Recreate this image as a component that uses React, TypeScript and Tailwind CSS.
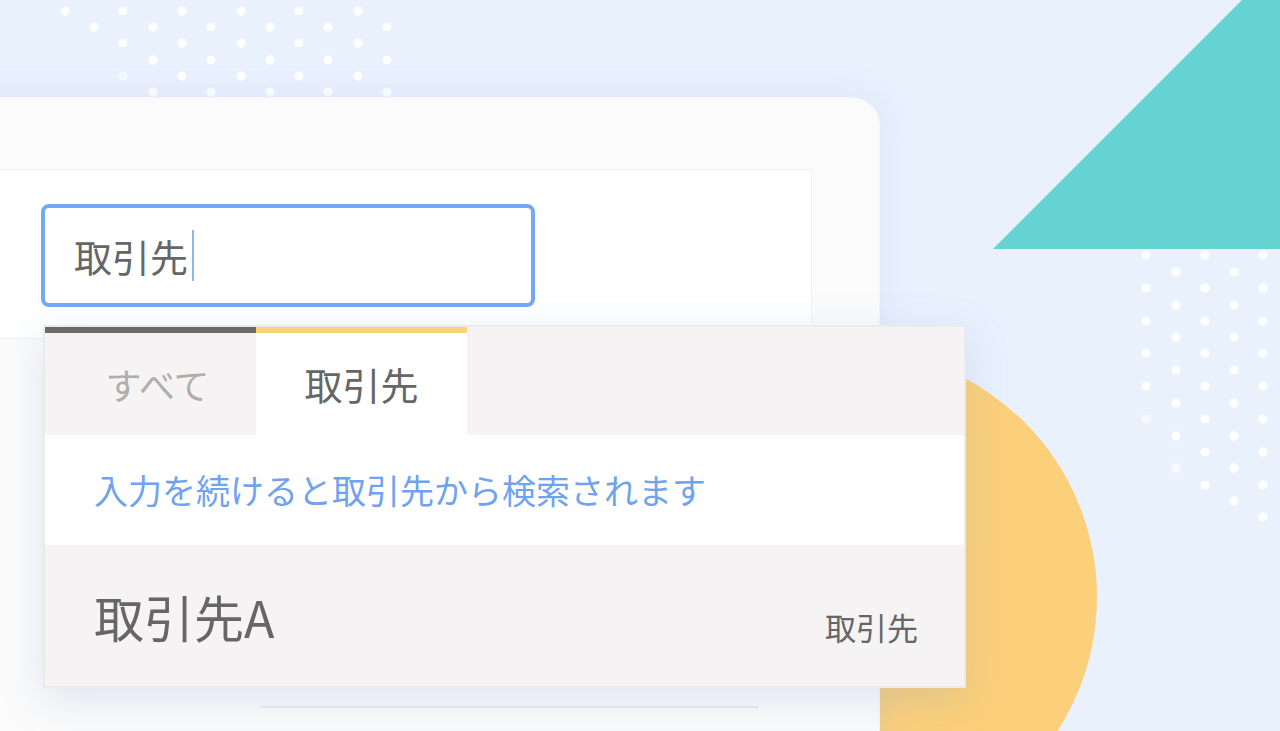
import React from 'react';

const jp = { fontFamily: '"Noto Sans CJK JP", "Noto Sans", sans-serif' };

function DotField({ cols, className }: { cols: { x: number; ys: number[]; fade?: number[] }[]; className: string }) {
  return (
    <svg className={className} width="1280" height="731" viewBox="0 0 1280 731">
      {cols.map((c) =>
        c.ys.map((y, i) => (
          <circle key={`${c.x}-${y}`} cx={c.x} cy={y} r="4.6" fill="#ffffff" opacity={c.fade?.includes(i) ? 0.6 : 0.95} />
        ))
      )}
    </svg>
  );
}

const step = (start: number, n: number, d: number) => Array.from({ length: n }, (_, i) => Math.round(start + i * d));

// top-left dot cluster
const topDots = [
  { x: 65, ys: [11] },
  { x: 94, ys: [27] },
  { x: 123, ys: [11, 43, 76], fade: [2] },
  { x: 153, ys: [27, 60, 92] },
  { x: 182, ys: [11, 43, 76] },
  { x: 211, ys: [27, 60, 92] },
  { x: 241, ys: [11, 43, 76] },
  { x: 270, ys: [27, 60, 92] },
  { x: 299, ys: [11, 43, 76] },
  { x: 328, ys: [27, 60, 92] },
  { x: 358, ys: [11, 43, 76] },
  { x: 387, ys: [27, 60, 92] },
];

// right dot cluster
const rightDots = [
  { x: 1146, ys: step(255, 6, 32.8), fade: [5] },
  { x: 1176, ys: step(272, 7, 32.7), fade: [6] },
  { x: 1205, ys: step(255, 8, 32.8) },
  { x: 1234, ys: step(272, 8, 32.7) },
  { x: 1263, ys: step(255, 9, 32.8) },
];

export default function App() {
  return (
    <div className="relative w-[1280px] h-[731px] overflow-hidden bg-[#e9f1fd]" style={jp}>
      {/* decorative shapes */}
      <DotField cols={topDots} className="absolute left-0 top-0" />
      <svg className="absolute left-0 top-0" width="1280" height="731" viewBox="0 0 1280 731">
        <polygon points="993,249 1280,249 1280,-38" fill="#66d3d3" />
        <circle cx="850" cy="597" r="247" fill="#fcd07a" />
      </svg>
      <DotField cols={rightDots} className="absolute left-0 top-0" />

      {/* app window */}
      <div className="relative ml-[-60px] mt-[97px] w-[940px] h-[700px] rounded-[28px] bg-[#fbfbfb] border border-[#f3f5f8] shadow-[0_0_30px_rgba(170,195,235,0.25)]">
        <div className="mt-[71px] w-[871px] h-[170px] bg-white border-y border-r border-[#f0f1f3] pl-[100px] pt-[34px]">
          <div className="relative w-[494px]">
            <div className="flex items-center h-[103px] rounded-[8px] border-[4px] border-[#75a7f5] bg-white px-[29px]">
              <span className="text-[38px] leading-none text-[#666666]">取引先</span>
              <span className="ml-[4px] w-[2px] h-[51px] bg-[#8fb3ec]" />
            </div>

            {/* suggestion dropdown */}
            <div className="absolute left-[2px] top-[121px] z-10 w-[923px] border-2 border-[#ecebeb] bg-[#f5f3f4] shadow-[0_12px_40px_rgba(120,150,200,0.22)]">
              <div className="flex h-[108px] bg-[#f5f3f4]">
                <div className="w-[211px] flex flex-col">
                  <div className="h-[6px] bg-[#6b6866]" />
                  <div className="flex-1 flex items-center justify-center pl-[14px] text-[36px] leading-none text-[#b0adad]">すべて</div>
                </div>
                <div className="w-[211px] flex flex-col bg-white">
                  <div className="h-[6px] bg-[#fcd27b]" />
                  <div className="flex-1 flex items-center justify-center text-[38px] leading-none text-[#666666]">取引先</div>
                </div>
              </div>
              <div className="h-[110px] flex items-center bg-white pl-[49px] text-[34px] leading-none text-[#6fa3ef]">
                入力を続けると取引先から検索されます
              </div>
              <div className="h-[141px] flex items-center justify-between pl-[49px] pr-[46px] bg-[#f5f3f4]">
                <span className="text-[50px] leading-none text-[#666666]">取引先A</span>
                <span className="mt-[22px] text-[31px] leading-none text-[#666666]">取引先</span>
              </div>
            </div>
          </div>
        </div>
        <div className="ml-[320px] mt-[367px] w-[497px] h-[2px] bg-[#e4ecf7]" />
      </div>
    </div>
  );
}
